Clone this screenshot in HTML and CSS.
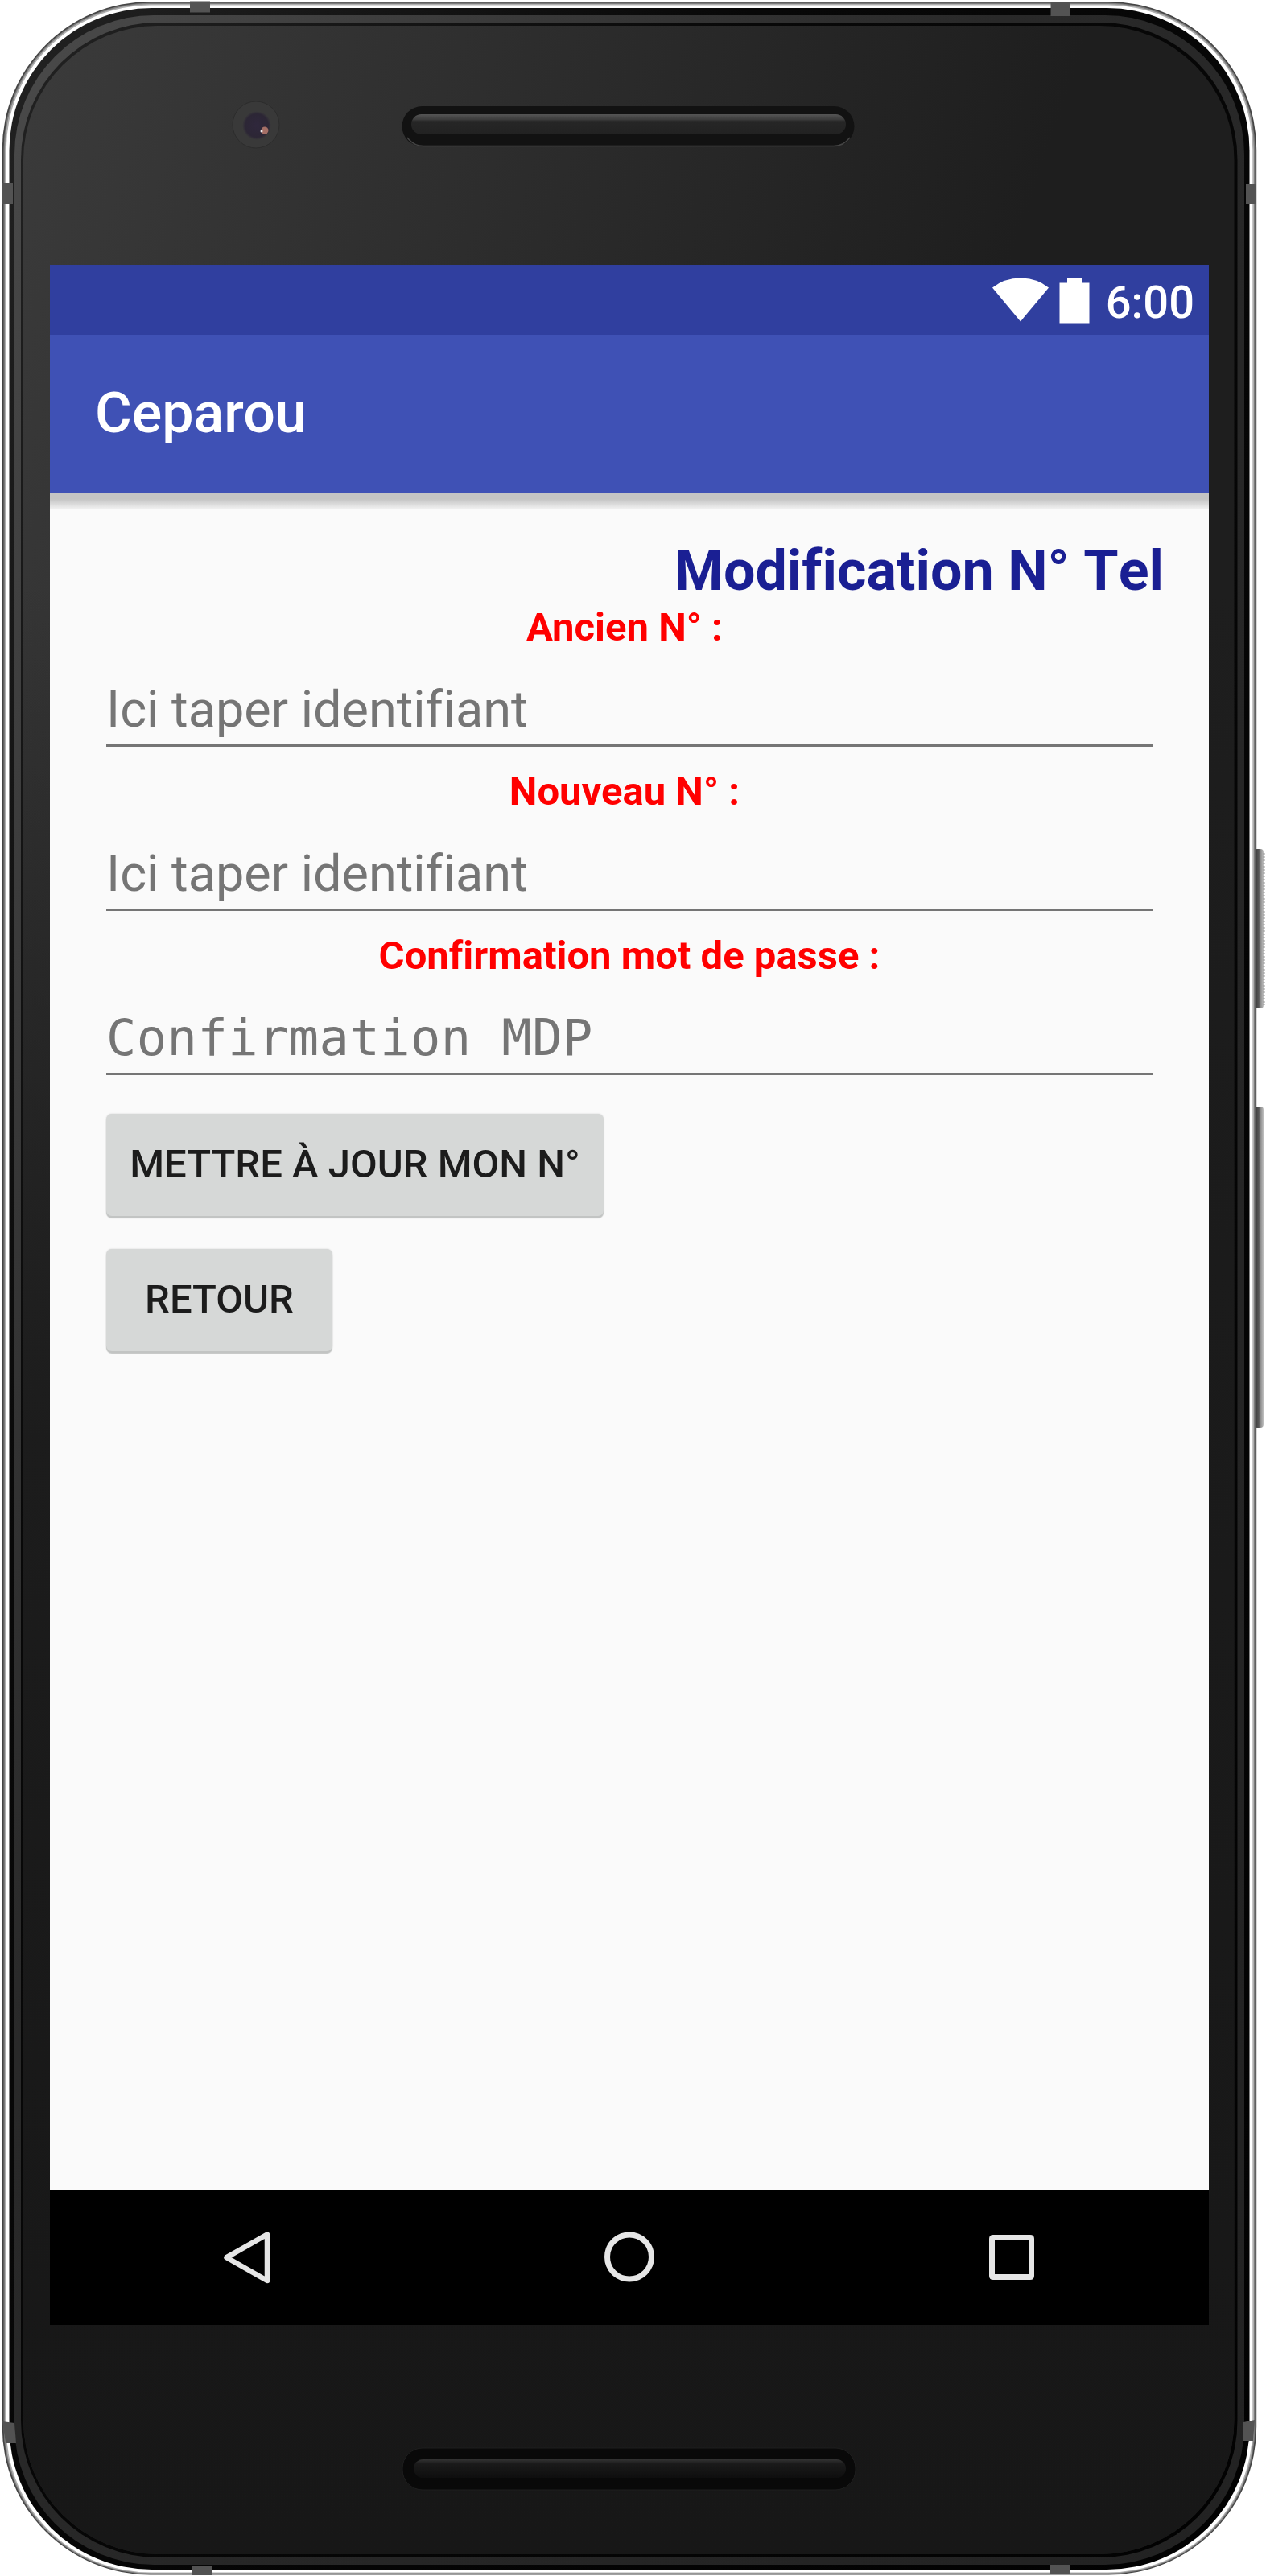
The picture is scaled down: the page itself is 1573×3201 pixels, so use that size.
FILE: index.html
```html
<!DOCTYPE html>
<html lang="fr">
<head>
<meta charset="utf-8">
<title>Ceparou</title>
<link rel="stylesheet" href="styles.css">
</head>
<body>
<div class="device">
  <svg class="shell" width="1573" height="3201" viewBox="0 0 1573 3201" fill="none" aria-hidden="true">
    <defs>
      <linearGradient id="glass" gradientUnits="userSpaceOnUse" x1="0" y1="250" x2="1150" y2="640">
        <stop offset="0" stop-color="#3a3a3a"/><stop offset=".5" stop-color="#2c2c2c"/><stop offset="1" stop-color="#1e1e1e"/>
      </linearGradient>
      <linearGradient id="shade" x1="0" y1="0" x2="0" y2="1">
        <stop offset=".22" stop-color="#191919" stop-opacity="0"/><stop offset=".56" stop-color="#1a1a1a" stop-opacity=".9"/><stop offset="1" stop-color="#171717"/>
      </linearGradient>
      <linearGradient id="ring" x1="0" y1="0" x2="1" y2="1">
        <stop offset="0" stop-color="#4a4a4a"/><stop offset=".4" stop-color="#292929"/><stop offset="1" stop-color="#222"/>
      </linearGradient>
      <linearGradient id="groove" x1="0" y1="0" x2="1" y2="1">
        <stop offset="0" stop-color="#222"/><stop offset=".3" stop-color="#080808"/><stop offset="1" stop-color="#020202"/>
      </linearGradient>
      <linearGradient id="key" x1="0" y1="0" x2="1" y2="0">
        <stop offset="0" stop-color="#333"/><stop offset=".5" stop-color="#555"/><stop offset=".68" stop-color="#888"/><stop offset="1" stop-color="#c4c4c4"/>
      </linearGradient>
      <linearGradient id="bar" x1="0" y1="0" x2="0" y2="1">
        <stop offset="0" stop-color="#555"/><stop offset=".26" stop-color="#3c3c3c"/><stop offset=".36" stop-color="#262626"/><stop offset="1" stop-color="#222"/>
      </linearGradient>
      <linearGradient id="bar-low" x1="0" y1="0" x2="0" y2="1">
        <stop offset="0" stop-color="#333"/><stop offset=".25" stop-color="#1a1a1a"/><stop offset="1" stop-color="#0e0e0e"/>
      </linearGradient>
      <radialGradient id="lens"><stop offset="0" stop-color="#2f273c"/><stop offset=".8" stop-color="#2c2635"/><stop offset="1" stop-color="#3a3a3a"/></radialGradient>
    </defs>
    <rect x="1558" y="1055" width="12" height="198" rx="4" fill="url(#key)"/>
    <path d="M1570.5 1060V1249" stroke="#999" stroke-width="2" stroke-dasharray="2 2"/>
    <rect x="1558" y="1375" width="12" height="399" rx="4" fill="url(#key)"/>
    <rect x="2.700" y="2" width="1558.500" height="3197.500" rx="184" fill="#444"/>
    <rect x="4.500" y="3.500" width="1555" height="3195" rx="182.500" fill="#7c7c7c"/>
    <rect x="6" y="5" width="1552" height="3192.500" rx="181" fill="#b0b0b0"/>
    <rect x="7.800" y="6.500" width="1548.500" height="3190" rx="179.500" fill="#fff"/>
    <rect x="11.500" y="10" width="1541" height="3183" rx="177" fill="url(#groove)"/>
    <rect x="18" y="19" width="1528" height="3168" rx="173" fill="url(#ring)"/>
    <rect x="26" y="28" width="1511.500" height="3150" rx="170" fill="url(#groove)"/>
    <rect x="29" y="32" width="1504.500" height="3142" rx="167" fill="url(#glass)"/>
    <rect x="29" y="32" width="1504.500" height="3142" rx="167" fill="url(#shade)"/>
    <g fill="#535353">
      <path d="M236 1.500h25v14h-25zM1305.500 3h24.500v17h-24.500zM3 228h13v25H3zM1548 229h13v25h-13zM3 3009l15 2 2 25H7zM1545 3010l14-3-2 26h-13zM238 3188h25v12h-25zM1305 3187h24v12h-24z"/>
    </g>
    <circle cx="318" cy="155" r="29" fill="#393939" stroke="#2c2c2c"/>
    <circle cx="319" cy="156" r="18" fill="url(#lens)"/>
    <circle cx="329" cy="162" r="4.500" fill="#a56f66"/>
    <circle cx="325" cy="163" r="1.500" fill="#eee"/>
    <rect x="499.500" y="132" width="562" height="50" rx="25" fill="#121212"/>
    <path d="M506 171q8 10.500 20 10.500h510q12 0 20-10.500" stroke="#444" stroke-width="1.500"/>
    <rect x="511" y="142" width="540" height="25" rx="12.500" fill="url(#bar)"/>
    <rect x="500" y="3042" width="563" height="52" rx="25" fill="#090909" stroke="#1e1e1e"/>
    <rect x="514" y="3056" width="537" height="23" rx="11.500" fill="url(#bar-low)"/>
  </svg>

  <main class="screen">
    <div class="status-bar">
      <svg class="wifi" width="70" height="55" viewBox="0 0 70 55"><path d="M0 12.500Q15 .5 35 .5T70 12.500L35 54.500Z" fill="#fff"/></svg>
      <svg class="battery" width="38" height="57" viewBox="0 0 38 57"><path d="M10 .5h18v6h9.500v50H.5v-50H10Z" fill="#fff"/></svg>
      <span class="clock">6:00</span>
    </div>
    <header class="app-bar">Ceparou</header>
    <section class="content">
      <h1 class="title">Modification N° Tel</h1>
      <div class="field">
        <div class="label">Ancien N° : </div>
        <div class="input">Ici taper identifiant</div>
      </div>
      <div class="field">
        <div class="label">Nouveau N° : </div>
        <div class="input">Ici taper identifiant</div>
      </div>
      <div class="field">
        <div class="label">Confirmation mot de passe :</div>
        <div class="input input-password">Confirmation MDP</div>
      </div>
      <div class="actions">
        <button class="button button-update">METTRE À JOUR MON N°</button>
        <button class="button button-back">RETOUR</button>
      </div>
    </section>
    <nav class="nav-bar">
      <svg width="80" height="80" viewBox="0 0 80 80" fill="none" stroke="#e6e6e6" stroke-width="6.500" stroke-linejoin="round"><path d="M65 11.500V69L14.500 40.200Z"/></svg>
      <svg width="80" height="80" viewBox="0 0 80 80" fill="none" stroke="#e6e6e6" stroke-width="7"><circle cx="40" cy="39.500" r="27.500"/></svg>
      <svg width="80" height="80" viewBox="0 0 80 80" fill="none"><path fill="#e6e6e6" fill-rule="evenodd" d="M17 12h46q5 0 5 5v46q0 5-5 5H17q-5 0-5-5V17q0-5 5-5ZM19 19v42h42V19Z"/></svg>
    </nav>
  </main>
</div>
</body>
</html>
```
FILE: styles.css
```css
* {
  box-sizing: border-box;
}

body {
  margin: 0;
  background: #fff;
  font-family: Roboto, "Liberation Sans", sans-serif;
  font-variant-ligatures: none;
}

.device {
  position: relative;
  width: 1573px;
  height: 3201px;
  padding: 329px 71px 312px 62px;
  overflow: hidden;
}

/* Phone body drawn behind the screen */
.shell {
  position: absolute;
  top: 0;
  left: 0;
}

.screen {
  position: relative;
  display: flex;
  flex-direction: column;
  height: 2560px;
  background: #fafafa;
}

.status-bar {
  display: flex;
  justify-content: flex-end;
  height: 87px;
  padding: 16px 18px 0 0;
  background: #303f9f;
  color: #fff;
}

.battery {
  margin-left: 13px;
}

.clock {
  margin-left: 20px;
  padding-top: 1px;
  font-size: 56px;
  font-weight: 500;
  line-height: 60px;
}

.app-bar {
  display: flex;
  align-items: center;
  height: 196px;
  padding: 0 56px 2px;
  background: #3f51b5;
  color: #fff;
  font-size: 70px;
  font-weight: 500;
}

.content {
  flex: 1;
  padding: 56px 56px 0;
  background: linear-gradient(#c4c4c4 0, #c4c4c4 8px, #f0f0f0 20px, #fafafa 21px);
}

.title {
  margin: 0;
  color: #1a1f93;
  font-size: 70px;
  font-weight: 700;
  font-kerning: none;
  line-height: 83px;
  text-align: right;
}

.field {
  height: 204px;
}

.label {
  color: #f00;
  font-size: 49px;
  font-weight: 700;
  line-height: 57px;
  text-align: center;
  white-space: pre;
}

.input {
  height: 120px;
  margin: 0 14px;
  padding-top: 37px;
  border-bottom: 3px solid #757575;
  color: #757575;
  font-size: 63px;
  line-height: 74px;
}

.input-password {
  font-family: "DejaVu Sans Mono", monospace;
  font-size: 62px;
  letter-spacing: 0.47px;
}

.actions {
  display: flex;
  flex-direction: column;
  align-items: flex-start;
  gap: 41px;
  padding: 21px 14px 0;
}

.button {
  height: 127px;
  padding: 0 0 2px;
  border: 0;
  border-radius: 7px;
  background: #d6d8d7;
  box-shadow: 0 3px 1px #c2c4c3, 0 0 2px #ccc;
  color: #1c1c1c;
  font-family: inherit;
  font-size: 49px;
  font-weight: 500;
}

.button-update {
  width: 618px;
}

.button-back {
  width: 281px;
}

.nav-bar {
  display: flex;
  align-items: center;
  justify-content: center;
  gap: 395px;
  height: 168px;
  background: #000;
}
```
